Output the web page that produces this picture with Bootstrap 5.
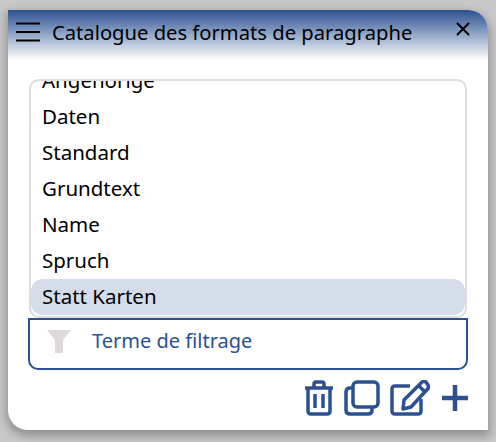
<!DOCTYPE html>
<html lang="fr"><head><meta charset="utf-8">
<title>Catalogue</title>
<link rel="stylesheet" href="https://cdn.jsdelivr.net/npm/bootstrap@5.3.0/dist/css/bootstrap.min.css">
<style>
html,body{height:442px;overflow:hidden}
body{background:#c8c8c8;padding:10px 8px 12px;font-family:"Noto Sans",sans-serif;color:#000}
.dlg{width:480px;height:420px;background:#fff;border-radius:0 20px 0 20px;box-shadow:0 4px 10px 2px rgba(0,0,0,.28);overflow:hidden}
.dlg-head{height:50px;background:linear-gradient(#2b5191 0,#fff 100%);padding:0 18px 6px 8px}
.dlg-title{font-size:20.200px;margin-left:12px;line-height:1}
.dlg-close{margin-top:-6px}
.dlg-body{padding:19px 20px 0}
.fmt-box{height:239px;border:2px solid #dfdcdf;border-radius:10px;overflow:hidden;margin:0 1px}
.fmt-list{margin-top:-18px;border-radius:0}
.fmt-list .list-group-item{height:36px;border:0;padding:0 11px;font-size:20.500px;line-height:34px;background:transparent;color:#000}
.fmt-list .list-group-item.is-sel{background:#d5dcea;border-radius:12px}
.filter-box{height:52px;border:2px solid #2b5191;border-radius:0 0 10px 10px;padding:0 16px 6px}
.filter-text{font-size:20px;color:#2b5191;margin-left:20px}
.tools{height:56px;gap:10px}
.tools svg{flex:none}
.tool-add{margin-left:2px}
</style></head><body>
<div class="dlg d-flex flex-column">
  <div class="dlg-head d-flex align-items-center">
    <svg width="24" height="20" viewBox="0 0 24 20" class="dlg-menu" aria-hidden="true"><path d="M0 1.500h24M0 10h24M0 18.500h24" stroke="#000" stroke-width="2" fill="none"/></svg>
    <div class="dlg-title flex-grow-1">Catalogue des formats de paragraphe</div>
    <svg width="14" height="14" viewBox="0 0 14 14" class="dlg-close" aria-hidden="true"><path d="M1 1l12 12M13 1L1 13" stroke="#000" stroke-width="2" fill="none"/></svg>
  </div>
  <div class="dlg-body">
    <div class="fmt-box">
      <div class="list-group fmt-list">
        <div class="list-group-item">Angehörige</div>
        <div class="list-group-item">Daten</div>
        <div class="list-group-item">Standard</div>
        <div class="list-group-item">Grundtext</div>
        <div class="list-group-item">Name</div>
        <div class="list-group-item">Spruch</div>
        <div class="list-group-item is-sel">Statt Karten</div>
      </div>
    </div>
    <div class="filter-box d-flex align-items-center">
      <svg width="26" height="26" viewBox="0 0 26 26" aria-hidden="true"><path d="M1 2h24l-8 10v13h-8V12z" fill="#dcd8db"/></svg>
      <div class="filter-text">Terme de filtrage</div>
    </div>
    <div class="tools d-flex justify-content-end align-items-center">
      <svg width="30" height="36" viewBox="0 0 30 36" fill="none" stroke="#2b5191" stroke-width="3.500" aria-hidden="true"><path d="M1 8h28M10 8V4q0-2 2-2h6q2 0 2 2v4M4 8v23q0 3 3 3h16q3 0 3-3V8M11 14v14M19 14v14" stroke-linejoin="round"/></svg>
      <svg width="36" height="36" viewBox="0 0 36 36" fill="none" stroke="#2b5191" stroke-width="3.500" aria-hidden="true"><rect x="9" y="2" width="25" height="25" rx="4"/><path d="M9 8H6q-4 0-4 4v18q0 4 4 4h18q4 0 4-4v-3"/></svg>
      <svg width="40" height="36" viewBox="0 0 40 36" fill="none" stroke="#2b5191" stroke-width="3.500" aria-hidden="true"><path d="M20 6H5q-3 0-3 3v22q0 3 3 3h23q3 0 3-3V19"/><path d="M14 20L32 2q2-1 4 0l2 3q1 2 0 3.500L21 27l-8 2z" stroke-linejoin="round"/><path d="M29 6l6 6"/></svg>
      <svg width="26" height="26" viewBox="0 0 26 26" fill="none" stroke="#2b5191" stroke-width="4.500" class="tool-add" aria-hidden="true"><path d="M13 0v26M0 13h26"/></svg>
    </div>
  </div>
</div>
<script src="https://cdn.jsdelivr.net/npm/bootstrap@5.3.0/dist/js/bootstrap.bundle.min.js"></script>
</body></html>
